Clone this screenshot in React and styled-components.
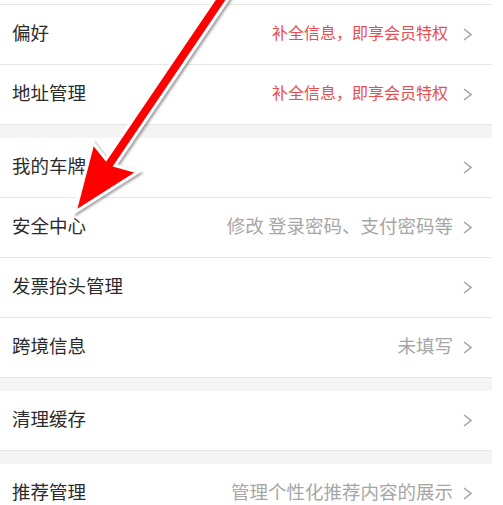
import React from 'react';
import styled, { createGlobalStyle } from 'styled-components';

const GlobalStyle = createGlobalStyle`
  html, body {
    margin: 0;
    padding: 0;
    background: #fff;
  }
  body {
    font-family: "Noto Sans CJK SC", "Noto Sans", sans-serif;
  }
`;

const groups = [
  [
    { label: '偏好', value: '补全信息，即享会员特权', tone: 'red' },
    { label: '地址管理', value: '补全信息，即享会员特权', tone: 'red' },
  ],
  [
    { label: '我的车牌' },
    { label: '安全中心', value: '修改 登录密码、支付密码等' },
    { label: '发票抬头管理' },
    { label: '跨境信息', value: '未填写' },
  ],
  [{ label: '清理缓存' }],
  [{ label: '推荐管理', value: '管理个性化推荐内容的展示' }],
];

function Chevron() {
  return (
    <ChevronIcon width="9" height="13" viewBox="0 0 9 13">
      <polyline points="1,1 8,6.5 1,12" fill="none" stroke="#a3a3a3" strokeWidth="1.5" />
    </ChevronIcon>
  );
}

function PointerArrow() {
  return (
    <ArrowLayer width="503" height="505" viewBox="0 0 503 505">
      <defs>
        <filter id="arrowShadow" x="-20%" y="-20%" width="140%" height="140%">
          <feDropShadow dx="2" dy="1.5" stdDeviation="1.2" floodColor="#555" floodOpacity="0.55" />
        </filter>
      </defs>
      <polygon
        points="75,212 138,172 115,165.5 228.5,-1.9 219.5,-8.1 106,159.2 93,143"
        fill="#ff0000"
        stroke="#fff"
        strokeWidth="3"
        strokeLinejoin="miter"
        filter="url(#arrowShadow)"
      />
    </ArrowLayer>
  );
}

export default function App() {
  return (
    <>
      <GlobalStyle />
      <Page>
        <List>
          {groups.map((rows, gi) => (
            <Group key={gi} $first={gi === 0}>
              {gi === 0 && <TopStub />}
              {rows.map(row => (
                <Row key={row.label}>
                  <Label>{row.label}</Label>
                  {row.value && <Value $tone={row.tone}>{row.value}</Value>}
                  <Chevron />
                </Row>
              ))}
            </Group>
          ))}
        </List>
        <PointerArrow />
      </Page>
    </>
  );
}

const Page = styled.div`
  position: relative;
  width: 503px;
  height: 505px;
  overflow: hidden;
  background: #fff;
`;

const List = styled.div`
  width: 492px;
  background: #f4f4f4;
`;

const Group = styled.section`
  margin-top: ${props => (props.$first ? '0' : '13px')};
  background: #fff;
`;

const TopStub = styled.div`
  height: 4px;
  border-bottom: 1px solid #e6e6e6;
`;

const Row = styled.div`
  display: flex;
  align-items: center;
  height: 59px;
  padding: 0 20px 0 12px;
  border-bottom: 1px solid #e6e6e6;
`;

const Label = styled.div`
  flex: 1;
  margin-bottom: 5px;
  font-size: 18.5px;
  color: #2b2b2b;
`;

const Value = styled.div`
  margin-bottom: 5px;
  margin-right: ${props => (props.$tone === 'red' ? '15px' : '10px')};
  font-size: ${props => (props.$tone === 'red' ? '16px' : '18.5px')};
  color: ${props => (props.$tone === 'red' ? '#ea4d4f' : '#a6a6a6')};
  white-space: nowrap;
`;

const ChevronIcon = styled.svg`
  display: block;
  flex-shrink: 0;
`;

const ArrowLayer = styled.svg`
  position: absolute;
  left: 0;
  top: 0;
  pointer-events: none;
`;
